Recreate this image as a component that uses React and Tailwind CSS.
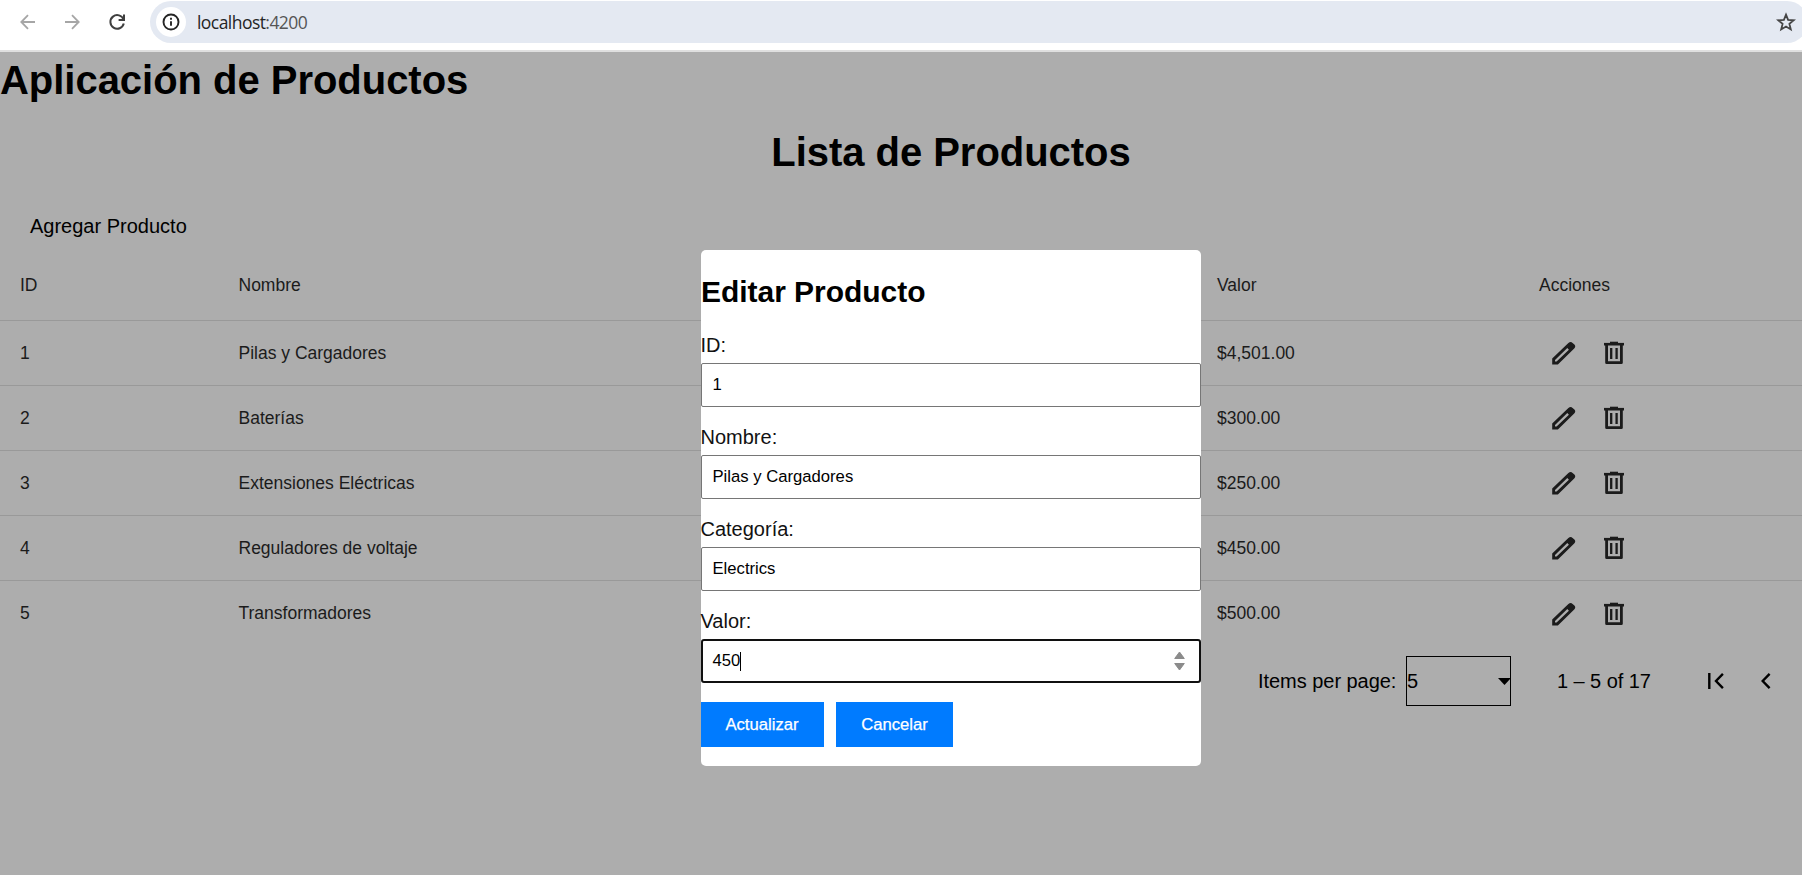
const SANS = "font-['Liberation_Sans',Arial,sans-serif]";

const products = [
  { id: 1, name: "Pilas y Cargadores", price: "$4,501.00" },
  { id: 2, name: "Baterías", price: "$300.00" },
  { id: 3, name: "Extensiones Eléctricas", price: "$250.00" },
  { id: 4, name: "Reguladores de voltaje", price: "$450.00" },
  { id: 5, name: "Transformadores", price: "$500.00" },
];

const COLS = "grid grid-cols-[218.5px_490px_488.5px_322px_1fr] pl-5 items-center";

function EditIcon() {
  return (
    <svg width="30" height="30" viewBox="0 0 30 30" fill="currentColor">
      <path
        fillRule="evenodd"
        d="M3.2 26.4V20.6L19.4 5.1C20.8 3.8 22.3 3.7 23.6 4.9L25.4 6.4C26.6 7.7 26.5 9.2 25.2 10.5L8.9 26.4ZM6 23.6H7.6L19.9 11.7L18.3 10.1L6 21.9Z"
      />
    </svg>
  );
}

function DeleteIcon() {
  return (
    <svg width="30" height="30" viewBox="0 0 30 30" fill="none" stroke="currentColor">
      <path d="M5 6.2h20" strokeWidth="2.6" />
      <path d="M11 4.6h8" strokeWidth="1.8" />
      <path d="M7.6 6v18.7h14.8V6" strokeWidth="2.8" strokeLinejoin="round" />
      <path d="M12.2 10v11M17.6 10v11" strokeWidth="2.3" />
    </svg>
  );
}

function BrowserBar() {
  return (
    <div className="flex h-[52px] w-full items-start border-b-2 border-[#dfdfdf] bg-white">
      <div className="flex h-[43px] w-[150px] shrink-0 items-center pl-5">
        <svg width="15" height="16" viewBox="0 0 15 16" fill="none" stroke="#a6a6a6" strokeWidth="1.8">
          <path d="M15 8H1.6M8 1.2L1.3 8 8 14.8" />
        </svg>
        <svg className="ml-[30px]" width="15" height="16" viewBox="0 0 15 16" fill="none" stroke="#a6a6a6" strokeWidth="1.8">
          <path d="M0 8h13.4M7 1.2L13.7 8 7 14.8" />
        </svg>
        <svg className="ml-[28px]" width="18" height="18" viewBox="0 0 18 18" fill="none" stroke="#3f3f3f" strokeWidth="2">
          <path d="M15.6 6.6A6.8 6.8 0 1 0 15.8 10.6" />
          <path d="M16 1.6V7h-5.4" />
        </svg>
      </div>
      <div className="mt-px flex h-[42px] w-[1658px] shrink-0 items-center rounded-full bg-[#e4e9f2] pl-1.5">
        <div className="flex size-[30px] items-center justify-center rounded-full bg-white">
          <svg width="18" height="18" viewBox="0 0 18 18" fill="none" stroke="#252525" strokeWidth="1.9">
            <circle cx="9" cy="9" r="7.5" />
            <path d="M9 8.2v4.6M9 4.8v2" />
          </svg>
        </div>
        <span className="ml-[11px] font-['Open_Sans','Noto_Sans',sans-serif] text-[17.5px] leading-6 tracking-[-0.55px] text-[#252525]">
          localhost<span className="text-[#555555]">:4200</span>
        </span>
        <svg className="mr-[12px] ml-auto" width="20" height="20" viewBox="0 0 20 20" fill="none" stroke="#454545" strokeWidth="1.8">
          <path d="M10 2.7l2.1 5.2 5.6.4-4.3 3.6 1.4 5.5L10 14.5l-4.8 2.9 1.4-5.5-4.3-3.6 5.6-.4z" />
        </svg>
      </div>
    </div>
  );
}

function ProductTable() {
  return (
    <div className="text-[17.5px] text-[#1b1b1b]">
      <div className={`${COLS} h-[71px] border-b border-[#999999]`}>
        <span>ID</span>
        <span>Nombre</span>
        <span />
        <span>Valor</span>
        <span>Acciones</span>
      </div>
      {products.map((p) => (
        <div key={p.id} className={`${COLS} group h-[65px] border-b border-[#999999] last:border-transparent`}>
          <span>{p.id}</span>
          <span>{p.name}</span>
          <span />
          <span>{p.price}</span>
          <span className="flex gap-5 pl-2.5 group-last:pt-0.5">
            <EditIcon />
            <DeleteIcon />
          </span>
        </div>
      ))}
    </div>
  );
}

function Paginator() {
  return (
    <div className="flex h-[70px] items-center pl-[1258px] text-[20px] leading-6 text-black">
      <span className="w-[148px] tracking-[-0.04px]">Items per page:</span>
      <div className="flex h-[50px] w-[105px] items-center justify-between border border-black">
        <span>5</span>
        <svg className="-mr-px" width="13" height="7" viewBox="0 0 13 7">
          <path d="M0 0h13L6.5 7z" />
        </svg>
      </div>
      <span className="ml-[46px] w-[151px] tracking-[-0.06px]">1 – 5 of 17</span>
      <svg width="16" height="16" viewBox="0 0 16 16" fill="none" stroke="black" strokeWidth="2.4">
        <path d="M1.3 0v16M14.9.9L8 8l6.9 7.1" />
      </svg>
      <svg className="ml-[37px]" width="10" height="16" viewBox="0 0 10 16" fill="none" stroke="black" strokeWidth="2.4">
        <path d="M8.6.9L1.7 8l6.9 7.1" />
      </svg>
    </div>
  );
}

function Field({ label, value, focused }) {
  return (
    <div className="mb-[18px]">
      <div className="h-[30px] text-[20px] leading-6 text-[#121212]">
        <span className="-ml-[0.5px]">{label}</span>
      </div>
      <div
        className={
          focused
            ? "flex h-11 items-center rounded-[3px] border-2 border-[#101010] pr-[10px] pl-[9.5px]"
            : "flex h-11 items-center rounded-[2px] border border-[#767676] px-[10.5px]"
        }
      >
        <span className="text-[16.67px] leading-5 text-black">{value}</span>
        {focused && (
          <>
            <span className="h-[19px] w-px bg-black" />
            <svg className="ml-auto" width="19" height="20" viewBox="0 0 19 20" fill="#8b8b8b" stroke="#8b8b8b" strokeLinejoin="round">
              <path d="M9.5 1L14.3 7.5H4.7zM9.5 19L14.3 12.5H4.7z" />
            </svg>
          </>
        )}
      </div>
    </div>
  );
}

function EditDialog() {
  return (
    <div className="absolute top-[250px] left-[701px] h-[516px] w-[500px] rounded-[5px] bg-white">
      <h2 className="h-[83px] pt-[27px] text-[30px] leading-[30px] font-bold tracking-[-0.04px] text-black">Editar Producto</h2>
      <Field label="ID:" value="1" />
      <Field label="Nombre:" value="Pilas y Cargadores" />
      <Field label="Categoría:" value="Electrics" />
      <Field label="Valor:" value="450" focused />
      <div className="mt-[19px] flex gap-3 text-[16.67px] text-white">
        <button className="h-[45px] w-[123px] bg-[#007bff] pr-px [-webkit-text-stroke:0.25px_white]">Actualizar</button>
        <button className="h-[45px] w-[117px] bg-[#007bff] [-webkit-text-stroke:0.25px_white]">Cancelar</button>
      </div>
    </div>
  );
}

export default function App() {
  return (
    <div className={`relative h-[875px] w-[1802px] overflow-hidden bg-[#adadad] ${SANS}`}>
      <BrowserBar />
      <div className="w-[1902px]">
        <h1 className="mt-2 text-[40px] leading-10 font-bold tracking-[-0.03px]">Aplicación de Productos</h1>
        <h1 className="mt-8 text-center text-[40px] leading-10 font-bold tracking-[-0.04px]">Lista de Productos</h1>
        <div className="mt-[42px] h-[36px] pl-[30px] text-[20px] leading-6">Agregar Producto</div>
        <ProductTable />
        <Paginator />
      </div>
      <EditDialog />
    </div>
  );
}
